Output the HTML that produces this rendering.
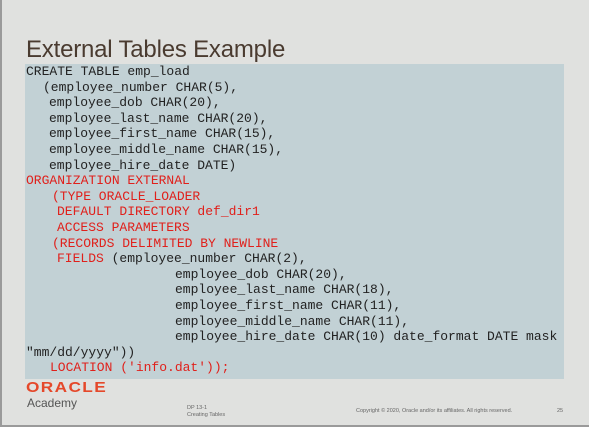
<!DOCTYPE html>
<html><head><meta charset="utf-8"><style>
html,body{margin:0;padding:0}
body{width:589px;height:427px;background:#e0e1df;position:relative;overflow:hidden;font-family:"Liberation Sans",sans-serif}
.frame{position:absolute;left:0;top:0;width:587px;height:425px;border-left:2px solid #9a9a9a;border-bottom:2px solid #9a9a9a;box-sizing:content-box}
.title{position:absolute;left:26px;top:36px;font-size:24px;color:#4a3b30;letter-spacing:-0.2px}
.box{position:absolute;left:25px;top:64px;width:539px;height:315px;background:#c2d1d5}
.code{position:absolute;left:26px;top:64px;font-family:"Liberation Mono",monospace;font-size:13px;line-height:15.6px;color:#222}
.code div{height:15.6px;white-space:pre}
.r{color:#e0201b}
.logo{position:absolute;left:26px;top:379px;font-size:15px;font-weight:bold;color:#e5482a;letter-spacing:1.2px;transform:scaleX(1.15);transform-origin:left}
.acad{position:absolute;left:27px;top:396px;font-size:12px;color:#555}
.sm{position:absolute;font-size:5.5px;color:#666;line-height:7px}
</style></head><body>
<div class="frame"></div>
<div class="title">External Tables Example</div>
<div class="box"></div>
<div class="code"><div>CREATE TABLE emp_load</div><div style="padding-left:17px">(employee_number CHAR(5),</div><div style="padding-left:23px">employee_dob CHAR(20),</div><div style="padding-left:23px">employee_last_name CHAR(20),</div><div style="padding-left:23px">employee_first_name CHAR(15),</div><div style="padding-left:23px">employee_middle_name CHAR(15),</div><div style="padding-left:23px">employee_hire_date DATE)</div><div class="r">ORGANIZATION EXTERNAL</div><div class="r" style="padding-left:26px">(TYPE ORACLE_LOADER</div><div class="r" style="padding-left:31px">DEFAULT DIRECTORY def_dir1</div><div class="r" style="padding-left:31px">ACCESS PARAMETERS</div><div class="r" style="padding-left:26px">(RECORDS DELIMITED BY NEWLINE</div><div style="padding-left:31px"><span class="r">FIELDS</span> (employee_number CHAR(2),</div><div style="padding-left:149px">employee_dob CHAR(20),</div><div style="padding-left:149px">employee_last_name CHAR(18),</div><div style="padding-left:149px">employee_first_name CHAR(11),</div><div style="padding-left:149px">employee_middle_name CHAR(11),</div><div style="padding-left:149px">employee_hire_date CHAR(10) date_format DATE mask</div><div>"mm/dd/yyyy"))</div><div class="r" style="padding-left:24px">LOCATION ('info.dat'));</div></div>
<div class="logo">ORACLE</div>
<div class="acad">Academy</div>
<div class="sm" style="left:187px;top:405px">DP 13-1<br>Creating Tables</div>
<div class="sm" style="left:356px;top:408px">Copyright © 2020, Oracle and/or its affiliates. All rights reserved.</div>
<div class="sm" style="left:557px;top:408px">25</div>
</body></html>
